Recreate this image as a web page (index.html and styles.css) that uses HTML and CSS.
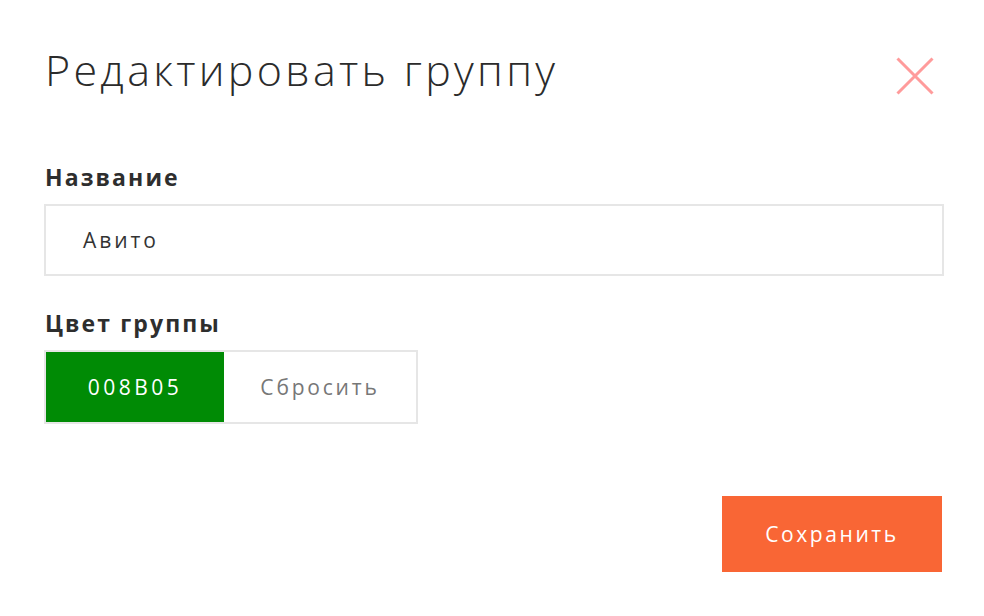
FILE: index.html
```html
<!DOCTYPE html>
<html lang="ru">
<head>
<meta charset="utf-8">
<link rel="stylesheet" href="styles.css">
</head>
<body>
<div class="modal">
  <header class="head">
    <h1 class="title">Редактировать группу</h1>
    <button class="close" aria-label="Закрыть">
      <svg width="38" height="38" viewBox="0 0 38 38"><path d="M1.5 1.5 L36.5 36.5 M36.5 1.5 L1.5 36.5" stroke="#ff9b9b" stroke-width="3" fill="none"/></svg>
    </button>
  </header>
  <div class="field">
    <div class="label">Название</div>
    <div class="input">Авито</div>
  </div>
  <div class="field">
    <div class="label">Цвет группы</div>
    <div class="color">
      <span class="swatch">008B05</span>
      <span class="reset">Сбросить</span>
    </div>
  </div>
  <div class="actions">
    <button class="save">Сохранить</button>
  </div>
</div>
</body>
</html>
```
FILE: styles.css
```css
html, body { margin: 0; padding: 0; background: #fff; }
body { font-family: "Open Sans", "Liberation Sans", sans-serif; color: #333; }
.modal { width: 984px; height: 616px; box-sizing: border-box; padding: 40px 40px 0 44px; display: flex; flex-direction: column; }
.head { display: flex; justify-content: space-between; align-items: flex-start; }
.title { margin: 0 0 0 1px; font-weight: 300; font-size: 43px; line-height: 60px; color: #2b2b2b; letter-spacing: 3.3px; }
.close { border: 0; background: none; padding: 0; margin: 17px 10px 0 0; width: 38px; height: 38px; display: block; }
.close svg { display: block; }
.field { display: flex; flex-direction: column; }
.label { font-weight: 700; font-size: 23px; line-height: 30px; margin: 0 0 12px 1px; color: #2e2e2e; letter-spacing: 2.1px; }
.head + .field .label { margin-top: 62px; }
.field + .field .label { margin-top: 32px; }
.input { height: 72px; box-sizing: border-box; border: 2px solid #e6e6e6; padding: 0 0 0 37px; display: flex; align-items: center; font-size: 21px; color: #333; letter-spacing: 2.9px; }
.color { display: flex; width: 374px; height: 74px; box-sizing: border-box; border: 2px solid #e6e6e6; }
.swatch { width: 178px; background: #008b05; color: #fff; display: flex; align-items: center; justify-content: center; font-size: 21px; letter-spacing: 3.5px; }
.reset { flex: 1; display: flex; align-items: center; justify-content: center; font-size: 21px; color: #777; letter-spacing: 2.8px; }
.actions { display: flex; justify-content: flex-end; margin-top: 72px; padding-right: 2px; }
.save { width: 220px; height: 76px; border: 0; background: #f96635; color: #fff; font-family: inherit; font-size: 21px; letter-spacing: 2.6px; padding: 0; }
```
